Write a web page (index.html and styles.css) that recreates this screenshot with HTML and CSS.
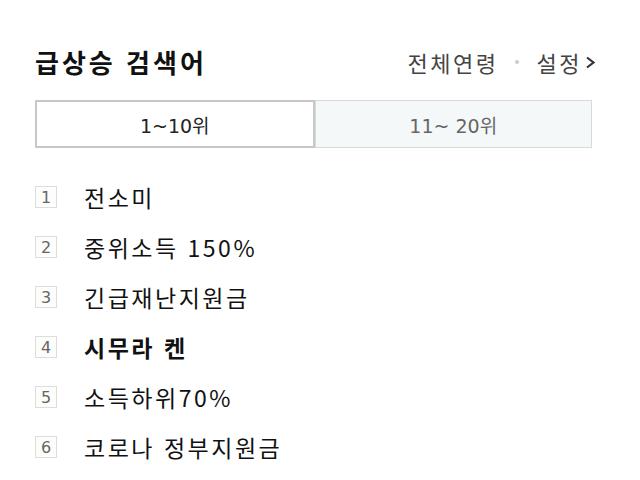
FILE: index.html
```html
<!DOCTYPE html>
<html lang="ko">
<head>
<meta charset="utf-8">
<link rel="stylesheet" href="styles.css">
</head>
<body>
<div class="panel">
  <div class="header">
    <h2 class="title">급상승 검색어</h2>
    <div class="opts">
      <span class="age">전체연령</span>
      <span class="dot"></span>
      <span class="set">설정</span>
      <svg class="chev" width="11" height="15" viewBox="0 0 11 15"><path d="M2 2.5 L8.5 7.5 L2 12.5" fill="none" stroke="#333" stroke-width="2.2"/></svg>
    </div>
  </div>
  <div class="tabs">
    <div class="tab active">1~10위</div>
    <div class="tab">11~ 20위</div>
  </div>
  <ol class="list">
    <li class="item"><span class="num">1</span><span class="kw">전소미</span></li>
    <li class="item"><span class="num">2</span><span class="kw">중위소득 150%</span></li>
    <li class="item"><span class="num">3</span><span class="kw">긴급재난지원금</span></li>
    <li class="item"><span class="num">4</span><span class="kw bold">시무라 켄</span></li>
    <li class="item"><span class="num">5</span><span class="kw">소득하위70%</span></li>
    <li class="item"><span class="num">6</span><span class="kw">코로나 정부지원금</span></li>
  </ol>
</div>
</body>
</html>
```

FILE: styles.css
```css
html, body {
  margin: 0;
  padding: 0;
  background: #fff;
}
body {
  font-family: "Noto Sans CJK KR", "DejaVu Sans", sans-serif;
  color: #111;
}
.panel {
  width: 557px;
  margin-left: 35px;
  padding-top: 44px;
}
.header {
  display: flex;
  justify-content: space-between;
  align-items: center;
  height: 36px;
}
.title {
  margin: 0;
  font-size: 26px;
  font-weight: bold;
  letter-spacing: 3px;
  line-height: 36px;
  color: #111;
}
.opts {
  display: flex;
  align-items: center;
  font-size: 22px;
  letter-spacing: 2.5px;
  color: #444;
  margin-right: -4px;
}
.dot {
  width: 4px;
  height: 4px;
  border-radius: 50%;
  background: #ccc;
  margin: 0 18px 0 16px;
}
.chev {
  margin-left: 3px;
}
.tabs {
  display: flex;
  margin-top: 20px;
  height: 48px;
}
.tab {
  flex: 1;
  display: flex;
  align-items: center;
  justify-content: center;
  border: 1px solid #d6dada;
  background: #f5f8f8;
  color: #666;
  font-family: "DejaVu Sans", "Noto Sans CJK KR", sans-serif;
  font-size: 19px;
}
.tab.active {
  background: #fff;
  border: 2px solid #c8c8c8;
  color: #222;
}
.list {
  list-style: none;
  margin: 24px 0 0 0;
  padding: 0;
}
.item {
  display: flex;
  align-items: center;
  height: 50px;
}
.num {
  width: 20px;
  height: 20px;
  border: 1px solid #ddd;
  background: #fdfdfb;
  display: flex;
  align-items: center;
  justify-content: center;
  font-family: "DejaVu Sans", sans-serif;
  font-size: 16px;
  color: #666;
  margin-right: 27px;
}
.kw {
  font-size: 23px;
  letter-spacing: 2.5px;
  color: #111;
  line-height: 30px;
}
.kw.bold {
  font-weight: bold;
}
```
